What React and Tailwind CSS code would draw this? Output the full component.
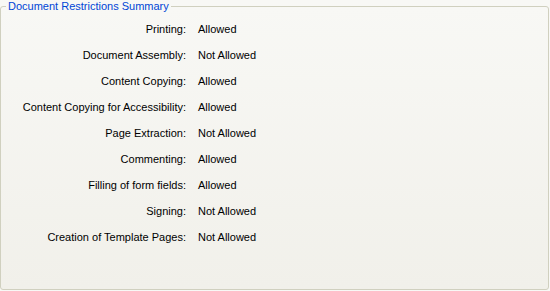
const restrictions = [
  { label: "Printing:", value: "Allowed" },
  { label: "Document Assembly:", value: "Not Allowed" },
  { label: "Content Copying:", value: "Allowed" },
  { label: "Content Copying for Accessibility:", value: "Allowed" },
  { label: "Page Extraction:", value: "Not Allowed" },
  { label: "Commenting:", value: "Allowed" },
  { label: "Filling of form fields:", value: "Allowed" },
  { label: "Signing:", value: "Not Allowed" },
  { label: "Creation of Template Pages:", value: "Not Allowed" },
];

export default function App() {
  return (
    <div className="w-[550px] h-[291px] bg-[#f8f8f5] font-['Liberation_Sans',Arial,sans-serif] text-[11px] text-black">
      <fieldset className="w-[549px] h-[290px] border border-[#d0d0bf] rounded-[3px] bg-gradient-to-b from-[#f8f8f5] to-[#f1f0ea] px-0">
        <legend className="ml-[5px] px-[2px] text-[#0046d5] leading-[12px]">
          Document Restrictions Summary
        </legend>
        <div className="grid grid-cols-[185px_1fr] gap-x-[12px] mt-[4px]">
          {restrictions.map((r) => (
            <div key={r.label} className="contents">
              <div className="text-right h-[26px] leading-[13px] pt-[7px]">{r.label}</div>
              <div className="h-[26px] leading-[13px] pt-[7px]">{r.value}</div>
            </div>
          ))}
        </div>
      </fieldset>
    </div>
  );
}
